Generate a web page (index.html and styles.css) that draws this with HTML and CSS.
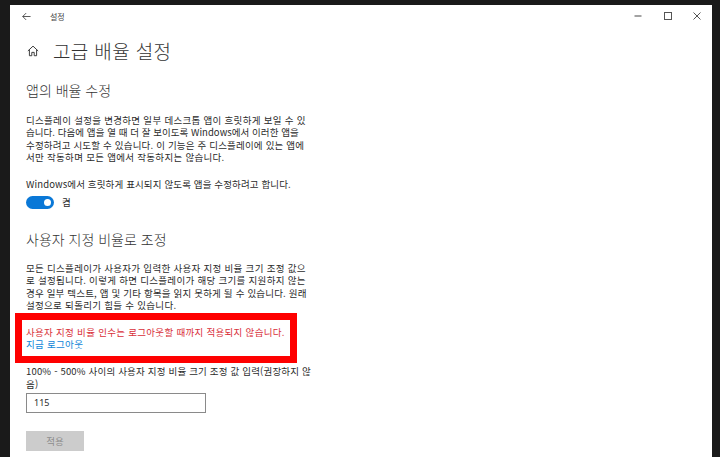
FILE: index.html
```html
<!DOCTYPE html>
<html lang="ko">
<head>
<meta charset="utf-8">
<title>설정</title>
<link rel="stylesheet" href="styles.css">
</head>
<body>
<main class="window">
  <header class="titlebar">
    <svg class="back" viewBox="0 0 10 10" width="9" height="9"><path d="M9.5 5H.8M4.6 1.2.8 5l3.8 3.8" fill="none" stroke="#333" stroke-width=".9"/></svg>
    <span class="apptitle">설정</span>
    <div class="controls">
      <span class="ctl"><svg viewBox="0 0 10 10" width="10" height="10"><path d="M1.5 5h7" stroke="#666" stroke-width="1.2"/></svg></span>
      <span class="ctl"><svg viewBox="0 0 10 10" width="10" height="10"><rect x="1.5" y="1.5" width="7" height="7" fill="none" stroke="#555" stroke-width="1"/></svg></span>
      <span class="ctl"><svg viewBox="0 0 10 10" width="10" height="10"><path d="M1.5 1.5l7 7M8.5 1.5l-7 7" stroke="#555" stroke-width="1"/></svg></span>
    </div>
  </header>
  <div class="content">
    <div class="pagehead">
      <svg class="home" viewBox="0 0 14 14" width="12" height="12"><path d="M1 7 7 1.3 13 7M2.8 5.6V12.5H5.6V8.6H8.4V12.5H11.2V5.6" fill="none" stroke="#333" stroke-width="1.1"/></svg>
      <h1>고급 배율 설정</h1>
    </div>
    <h2 class="sec1">앱의 배율 수정</h2>
    <p class="para first">
      <span>디스플레이 설정을 변경하면 일부 데스크톱 앱이 흐릿하게 보일 수 있</span>
      <span class="tight">습니다. 다음에 앱을 열 때 더 잘 보이도록 Windows에서 이러한 앱을</span>
      <span class="snug">수정하려고 시도할 수 있습니다. 이 기능은 주 디스플레이에 있는 앱에</span>
      <span>서만 작동하며 모든 앱에서 작동하지는 않습니다.</span>
    </p>
    <p class="togglelabel">Windows에서 흐릿하게 표시되지 않도록 앱을 수정하려고 합니다.</p>
    <div class="togglerow">
      <span class="toggle"><span class="knob"></span></span>
      <span class="state">켬</span>
    </div>
    <h2 class="sec2">사용자 지정 비율로 조정</h2>
    <p class="para second">
      <span>모든 디스플레이가 사용자가 입력한 사용자 지정 비율 크기 조정 값으</span>
      <span>로 설정됩니다. 이렇게 하면 디스플레이가 해당 크기를 지원하지 않는</span>
      <span class="snug">경우 일부 텍스트, 앱 및 기타 항목을 읽지 못하게 될 수 있습니다. 원래</span>
      <span>설정으로 되돌리기 힘들 수 있습니다.</span>
    </p>
    <div class="notice">
      <p class="warn">사용자 지정 비율 인수는 로그아웃할 때까지 적용되지 않습니다.</p>
      <a class="link" href="#">지금 로그아웃</a>
    </div>
    <p class="para inputlabel">
      <span class="snug">100% - 500% 사이의 사용자 지정 비율 크기 조정 값 입력(권장하지 않</span>
      <span>음)</span>
    </p>
    <div class="field">115</div>
    <div class="apply">적용</div>
  </div>
</main>
</body>
</html>
```
FILE: styles.css
```css
html, body { margin: 0; padding: 0; height: 457px; overflow: hidden; }
body {
  background: #1a1a1a;
  padding: 5px 8px 0 10px;
  box-sizing: border-box;
  font-family: "Noto Sans CJK KR", "Noto Sans", sans-serif;
  color: #2b2b2b;
}
.window { background: #fff; height: 452px; overflow: hidden; }
.titlebar { display: flex; align-items: center; height: 22px; padding-left: 12px; }
.back { flex: none; }
.apptitle { margin-left: 19px; font-size: 8px; color: #444; }
.controls { margin-left: auto; display: flex; }
.ctl { width: 29.5px; height: 22px; display: flex; align-items: center; justify-content: center; }
.content { padding-left: 16px; }
.pagehead { display: flex; align-items: center; margin-top: 6px; height: 36px; }
.home { flex: none; margin-left: 1px; }
h1 { margin: 0 0 0 14px; font-size: 19px; font-weight: 300; letter-spacing: .35px; line-height: 36px; color: #333; }
h2 { margin: 0; font-size: 14px; font-weight: 300; letter-spacing: 0; line-height: 20px; color: #333; }
.sec1 { margin-top: 11px; }
.sec2 { margin-top: 20px; }
.para { margin: 0; font-size: 9.5px; line-height: 12.3px; letter-spacing: .3px; }
.para span { display: block; white-space: nowrap; }
.para .tight { letter-spacing: .05px; }
.para .snug { letter-spacing: .18px; }
.first { margin-top: 14px; }
.second { margin-top: 13px; }
.togglelabel { margin: 15px 0 0; font-size: 9.5px; line-height: 12px; letter-spacing: .13px; }
.togglerow { display: flex; align-items: center; margin-top: 5px; height: 14px; }
.toggle { width: 28px; height: 13px; border-radius: 7px; background: #0a78d7; display: flex; align-items: center; justify-content: flex-end; padding-right: 3px; box-sizing: border-box; }
.knob { width: 7px; height: 7px; border-radius: 50%; background: #fff; }
.state { margin-left: 8px; font-size: 9.5px; }
.notice { margin: 2px 0 0 -11px; width: 264px; border: 7px solid #fe0000; padding: 6px 0 0 4px; height: 30px; box-sizing: content-box; }
.warn { margin: 0; font-size: 9.5px; line-height: 12px; color: #d9303a; letter-spacing: .3px; white-space: nowrap; }
.link { display: block; font-size: 9.5px; line-height: 12px; color: #0f86d8; text-decoration: none; letter-spacing: .3px; }
.inputlabel { margin-top: 2px; }
.field { margin-top: 3px; width: 180px; height: 20px; box-sizing: border-box; border: 1px solid #8a8a8a; font-family: "Noto Sans", sans-serif; font-size: 9px; line-height: 18px; padding-left: 7px; }
.apply { margin-top: 18px; width: 58px; height: 20px; background: #cccccc; color: #8d8d8d; font-size: 9.5px; line-height: 20px; text-align: center; }
```
